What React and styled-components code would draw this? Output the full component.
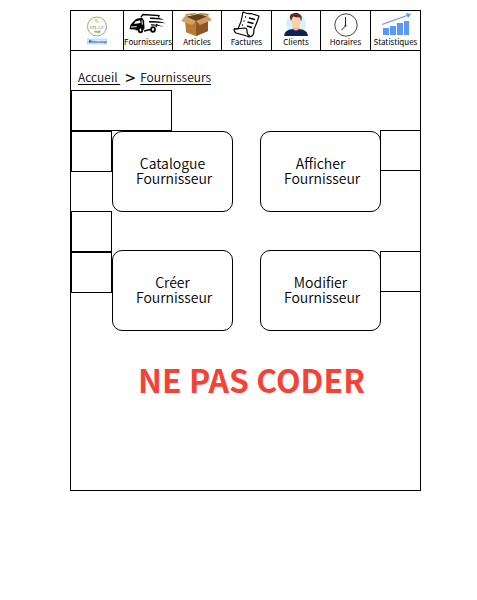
import React from "react";
import styled, { createGlobalStyle } from "styled-components";

const GlobalStyle = createGlobalStyle`
  * { box-sizing: border-box; }
  body {
    margin: 0;
    background: #fff;
    color: #000;
    font-family: "Noto Sans CJK SC", "Noto Sans", sans-serif;
    font-weight: 350;
  }
`;

const Frame = styled.div`
  margin: 10px 56px 20px 70px;
  min-height: 481px;
  border: 1px solid #000;
`;

const NavBar = styled.nav`
  display: grid;
  grid-template-columns: 53fr 49fr 49fr 50fr 49fr 50fr 49fr;
  height: 40px;
  border-bottom: 1px solid #000;
`;

const NavItem = styled.a`
  display: flex;
  flex-direction: column;
  align-items: center;
  min-width: 0;
  color: #000;
  text-decoration: none;
  border-right: 1px solid #000;

  &:last-child {
    border-right: 0;
  }

  svg {
    display: block;
    flex: none;
  }
`;

const IconBox = styled.span`
  display: flex;
  align-items: center;
  justify-content: center;
  height: 26px;
`;

const NavLabel = styled.span`
  font-size: 8px;
  font-weight: 400;
  line-height: 10px;
  white-space: nowrap;
`;

const Breadcrumb = styled.nav`
  display: flex;
  align-items: center;
  gap: 5px;
  height: 39px;
  padding: 12px 7px 0;
  font-size: 12px;
  line-height: 20px;
`;

const Crumb = styled.a`
  color: #000;
  white-space: pre;
  text-decoration: underline;
  text-underline-offset: 2px;
`;

const Separator = styled.span`
  font-size: 18px;
  font-weight: 400;
  line-height: 20px;
`;

const Banner = styled.div`
  width: 101px;
  height: 41px;
  border: 1px solid #000;
`;

const Board = styled.main`
  display: flex;
  align-items: flex-start;
`;

const Side = styled.div`
  display: flex;
  flex-direction: column;
  flex: none;
  margin: ${(p) => (p.$right ? "-1px -1px 0" : "0")};
`;

const Slot = styled.div`
  width: 41px;
  height: 41px;
  border: 1px solid #000;
  margin-bottom: ${(p) => p.$gap || 0}px;
`;

const Cards = styled.div`
  flex: 1;
  display: grid;
  grid-template-columns: 121px 121px;
  justify-content: space-between;
  row-gap: 38px;
`;

const Card = styled.button`
  height: 81px;
  padding: 0 0 2px;
  border: 1px solid #000;
  border-radius: 10px;
  background: #fff;
  color: #000;
  font: inherit;
  font-size: 14px;
  line-height: 15px;
  text-align: center;
  white-space: pre;
`;

const Notice = styled.h1`
  margin: 23px 0 0;
  padding-left: 12px;
  color: #f44336;
  font-size: 32px;
  font-weight: 700;
  line-height: 50px;
  text-align: center;
`;

const LogoIcon = () => (
  <svg width="26" height="36" viewBox="0 0 26 36" aria-label="PILAF Biocoop">
    <circle cx="13" cy="15.500" r="9.500" fill="#fff" stroke="#86b379" strokeWidth="1" />
    <path d="M10 8q4-1 5 4q-4 0-5-4z" fill="#dfe08a" />
    <path d="M10 20.500q2-2 3 0q2-2 4 0q-2 3-4 1q-2 1-3-1z" fill="#96bd72" />
    <text x="13" y="17.500" textAnchor="middle" fontFamily="Liberation Serif" fontSize="5" fill="#8b7a5b">PILAF</text>
    <rect x="3.500" y="28" width="19" height="5" fill="#dceaf5" stroke="#9bbfdb" strokeWidth="0.5" />
    <path d="M4.500 30.500l1.500-2 1.500 2-1.500 2z" fill="#1d6eaa" />
    <text x="15" y="32" textAnchor="middle" fontFamily="Liberation Sans" fontWeight="700" fontSize="4" fill="#1668a8">biocoop</text>
  </svg>
);

const TruckIcon = () => (
  <svg width="42" height="26" viewBox="0 0 42 26" aria-hidden="true">
    <path d="M14 5L16 3 32 4l-3 13-11 3-3-10z" fill="#fff" />
    <path d="M14 6L16 3.500 32 4.500l-.5 2M29 16l1-3M17 20l11-2.500" stroke="#000" strokeWidth="1.300" fill="none" />
    <path d="M23 6.500q9-.5 14 2.200-7-.8-14-.8zM22 10q10-.5 17 2.200-8-.8-17-.8zM24 13.300q7-.3 13 2.500-6-1.200-13-1.200z" fill="#000" />
    <path d="M5 12l4-4 6-1.500 2 3 .5 8-2 2.500-9-1-4-1 1-4z" fill="#000" />
    <path d="M8.500 10.500l4.500-1.200.5 2.700-6.500 1zM4 15.500l6-.3-.5 1-5.500.3zM14.500 9l1 .5.3 4-1 .2z" fill="#fff" />
    <path d="M5 18.500l4 .6" stroke="#fff" strokeWidth="0.700" />
    <ellipse cx="13.500" cy="19" rx="2.600" ry="3.200" fill="#000" />
    <ellipse cx="13.500" cy="19" rx="0.900" ry="1.400" fill="#fff" />
    <ellipse cx="26" cy="18.500" rx="2.800" ry="3.200" fill="#000" />
    <ellipse cx="26" cy="18.500" rx="1" ry="1.400" fill="#fff" />
  </svg>
);

const BoxIcon = () => (
  <svg width="34" height="26" viewBox="0 0 34 26" aria-hidden="true">
    <path d="M5 6L19 3l9 3v14l-12 5-10-4z" fill="#8b5a2b" />
    <path d="M5 6l14-3 9 3-12 5z" fill="#68401c" />
    <path d="M6 8l10 3v14l-10-4z" fill="#b77c3c" />
    <path d="M16 11l12-3v12l-12 5z" fill="#8e5726" />
    <path d="M5 5l11 5-4 4L1 10z" fill="#d7a365" />
    <path d="M5 5l13-2-3-1-9 1z" fill="#bd884f" />
    <path d="M18 3l10 2 1-2-8-1z" fill="#b78046" />
    <path d="M16 10l12-5 4 4-12 5z" fill="#d19a5c" />
  </svg>
);

const InvoiceIcon = () => (
  <svg width="28" height="28" viewBox="0 0 28 28" fill="none" stroke="#000" strokeWidth="1.200" strokeLinejoin="round" aria-hidden="true">
    <path d="M10 2q4 2 8 1.500l8 2.500q-2 7-5 13q0 4-1 6q-3 3-6 1L3 23q-2-1-2-4h4q4-8 5-17z" fill="#fff" />
    <path d="M1 19l11-1q2 0 2 3 0 4 3 5" />
    <path d="M12 7h1M16 8l6 1.500M10.500 11h1M14.500 12l6 1.500M9 15h1M14 16l5 1.500" strokeWidth="1.400" />
  </svg>
);

const ClientIcon = () => (
  <svg width="26" height="26" viewBox="0 0 26 26" aria-hidden="true">
    <circle cx="13" cy="13" r="10" fill="#d5f1fb" />
    <path d="M10 14h6v5l-3 2-3-2z" fill="#f3b892" />
    <path d="M1 25q0-6 9-7q3 3 6 0q9 1 9 7z" fill="#0d2355" />
    <ellipse cx="13" cy="10.500" rx="4.500" ry="6.500" fill="#ffd0af" />
    <path d="M8 10Q5 3 10 2.500q4-2 7 1q3 2 1 7l-1-4q-5 0-7-1z" fill="#5c2e22" />
  </svg>
);

const ClockIcon = () => (
  <svg width="26" height="26" viewBox="0 0 26 26" fill="none" stroke="#444" strokeWidth="1" aria-hidden="true">
    <circle cx="13" cy="14" r="11.200" />
    <path d="M12.500 6v9l-4 4" stroke="#222" strokeWidth="1" />
    <circle cx="12.500" cy="14.500" r="1" fill="#222" stroke="none" />
  </svg>
);

const StatsIcon = () => (
  <svg width="30" height="26" viewBox="0 0 30 26" aria-hidden="true">
    <path d="M2 17h6v7H2zM9 15h6v9H9zM16 12h6v12h-6zM23 10h5v14h-5z" fill="#5a98fa" />
    <path d="M1 13.500L26 4.500" stroke="#5a98fa" strokeWidth="1.200" />
    <path d="M25 2l5 1-3 4z" fill="#5a98fa" />
  </svg>
);

const NAV = [
  { label: "Fournisseurs", Icon: TruckIcon },
  { label: "Articles", Icon: BoxIcon },
  { label: "Factures", Icon: InvoiceIcon },
  { label: "Clients", Icon: ClientIcon },
  { label: "Horaires", Icon: ClockIcon },
  { label: "Statistiques", Icon: StatsIcon },
];

const ACTIONS = ["Catalogue", "Afficher", "Créer", "Modifier"];

export default function App() {
  return (
    <>
      <GlobalStyle />
      <Frame>
        <NavBar>
          <NavItem href="#accueil">
            <LogoIcon />
          </NavItem>
          {NAV.map(({ label, Icon }) => (
            <NavItem key={label} href={`#${label.toLowerCase()}`}>
              <IconBox>
                <Icon />
              </IconBox>
              <NavLabel>{label}</NavLabel>
            </NavItem>
          ))}
        </NavBar>
        <Breadcrumb>
          <Crumb href="#accueil">{"Accueil "}</Crumb>
          <Separator>&gt;</Separator>
          <Crumb href="#fournisseurs">Fournisseurs</Crumb>
        </Breadcrumb>
        <Banner />
        <Board>
          <Side>
            <Slot $gap={39} />
            <Slot />
            <Slot />
          </Side>
          <Cards>
            {ACTIONS.map((action) => (
              <Card key={action} type="button">
                {`${action}\n Fournisseur`}
              </Card>
            ))}
          </Cards>
          <Side $right>
            <Slot $gap={80} />
            <Slot />
          </Side>
        </Board>
        <Notice>NE PAS CODER</Notice>
      </Frame>
    </>
  );
}
